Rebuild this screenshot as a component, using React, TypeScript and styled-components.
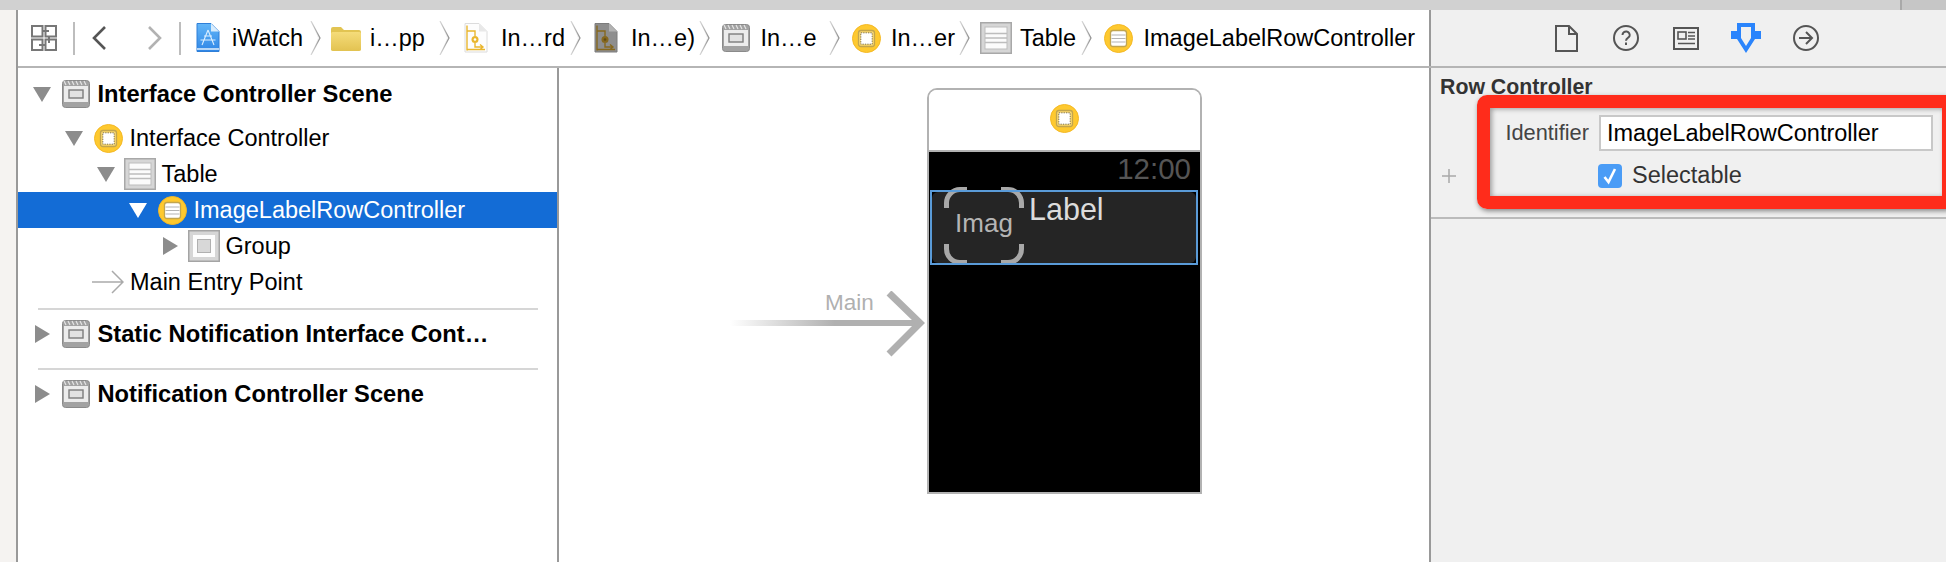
import React from "react";
import styled, { createGlobalStyle } from "styled-components";

const Global = createGlobalStyle`
  html, body { margin: 0; padding: 0; background: #fff; }
  body { font-family: "Liberation Sans", Arial, sans-serif; }
  * { box-sizing: border-box; }
`;

const Page = styled.div`
  width: 1946px;
  height: 562px;
  overflow: hidden;
  display: flex;
  flex-direction: column;
  font-size: 23.5px;
  color: #000;
`;
const TopBar = styled.div`
  height: 10px;
  flex: none;
  background: linear-gradient(to right, #d1d1d1 1900px, #a9a9a9 1900px, #a9a9a9 1902px, #c6c6c6 1902px);
`;
const Workspace = styled.div`
  flex: 1;
  display: flex;
  min-height: 0;
`;
const Gutter = styled.div`
  width: 16px;
  flex: none;
  background: #f5f3f1;
`;
const Main = styled.div`
  flex: 1;
  display: flex;
  flex-direction: column;
  border-left: 2px solid #999;
  min-width: 0;
`;
const HeaderRow = styled.div`
  height: 58px;
  flex: none;
  display: flex;
  border-bottom: 2px solid #b5b5b5;
`;
const Breadcrumb = styled.div`
  flex: 1;
  display: flex;
  align-items: center;
  padding-left: 13px;
  background: #fff;
  white-space: nowrap;
`;
const ToolDivider = styled.span<{ $ml: number }>`
  width: 2px;
  height: 33px;
  background: #bdbdbd;
  margin-left: ${(p) => p.$ml}px;
  flex: none;
`;
const NavArrow = styled.svg<{ $ml: number }>`
  margin-left: ${(p) => p.$ml}px;
  flex: none;
`;
const Crumb = styled.div<{ $w: number; $lead: number; $ml?: number }>`
  width: ${(p) => p.$w}px;
  margin-left: ${(p) => p.$ml ?? 0}px;
  flex: none;
  display: grid;
  grid-template-columns: ${(p) => p.$lead}px 1fr;
  align-items: center;
  line-height: 36px;
  color: #000;
`;
const CrumbSep = styled.svg<{ $after: number }>`
  width: 11px;
  height: 34px;
  flex: none;
  margin-right: ${(p) => p.$after}px;
`;
const InspectorTabs = styled.div`
  width: 517px;
  flex: none;
  border-left: 2px solid #999;
  background: #f0f0f0;
  display: flex;
  align-items: center;
  padding-left: 105px;
`;
const TabSlot = styled.div`
  width: 60px;
  display: flex;
  justify-content: center;
`;
const BodyRow = styled.div`
  flex: 1;
  display: flex;
  min-height: 0;
`;
const Navigator = styled.div`
  width: 541px;
  flex: none;
  border-right: 2px solid #999;
  padding-top: 8px;
  background: #fff;
`;
const TreeRow = styled.div<{ $depth: number; $bold?: boolean; $selected?: boolean; $mt?: number }>`
  height: 36px;
  margin-top: ${(p) => p.$mt ?? 0}px;
  display: flex;
  align-items: center;
  padding-left: ${(p) => 15 + p.$depth * 32}px;
  font-weight: ${(p) => (p.$bold ? 700 : 400)};
  font-size: ${(p) => (p.$bold ? 23.7 : 23.5)}px;
  background: ${(p) => (p.$selected ? "#136cd6" : "transparent")};
  color: ${(p) => (p.$selected ? "#fff" : "#000")};
  line-height: 36px;
  white-space: nowrap;
`;
const TriangleSlot = styled.span`
  width: 18px;
  flex: none;
  margin-right: 9px;
  display: flex;
  justify-content: center;
`;
const IconSlot = styled.span`
  width: 32px;
  flex: none;
  margin-right: 5.5px;
  display: flex;
  align-items: center;
  justify-content: center;
`;
const EntryRow = styled.div`
  height: 36px;
  display: flex;
  align-items: center;
  padding-left: 73.5px;
  line-height: 36px;
`;
const EntrySlot = styled.span`
  width: 38.5px;
  flex: none;
  display: flex;
`;
const TreeSeparator = styled.div<{ $mt: number }>`
  height: 2px;
  background: #d6d6d6;
  margin: ${(p) => p.$mt}px 19.5px 0 20px;
`;
const Canvas = styled.div`
  flex: 1;
  display: flex;
  align-items: flex-start;
  padding: 20px 0 0 171px;
  background: #fff;
  min-width: 0;
`;
const EntryPoint = styled.div`
  width: 197px;
  height: 66px;
  flex: none;
  margin-top: 203px;
  position: relative;
`;
const EntryLabel = styled.span`
  position: absolute;
  left: 95px;
  top: -3px;
  font-size: 22.5px;
  line-height: 30px;
  color: #b0b0b0;
`;
const Device = styled.div`
  width: 275px;
  height: 406px;
  flex: none;
  display: flex;
  flex-direction: column;
  border: 2px solid #b2b2b2;
  border-radius: 10px 10px 0 0;
  overflow: hidden;
`;
const DeviceHeader = styled.div`
  height: 62px;
  flex: none;
  border-bottom: 2px solid #b2b2b2;
  display: flex;
  justify-content: center;
  align-items: center;
  padding-bottom: 3px;
  background: #fff;
`;
const Screen = styled.div`
  flex: 1;
  background: #000;
  display: flex;
  flex-direction: column;
`;
const Time = styled.div`
  text-align: right;
  font-size: 29.5px;
  line-height: 34px;
  color: #555;
  padding-right: 9px;
  margin-bottom: 4px;
`;
const RowFrame = styled.div`
  margin-left: 1px;
  width: 268px;
  height: 75px;
  padding: 2px;
  position: relative;
  &::after {
    content: "";
    position: absolute;
    inset: 0;
    border: 2px solid #5a9bd8;
    pointer-events: none;
  }
`;
const RowInner = styled.div`
  height: 100%;
  background: #252525;
  border-radius: 6px;
  display: flex;
  align-items: flex-start;
  padding-left: 12px;
`;
const ImagePlaceholder = styled.div`
  width: 80px;
  height: 78px;
  flex: none;
  margin-top: -5px;
  position: relative;
  display: flex;
  align-items: center;
  justify-content: center;
  padding-bottom: 6px;
  font-size: 26px;
  color: #b5b5b5;
`;
const Brackets = styled.svg`
  position: absolute;
  inset: 0;
`;
const RowLabel = styled.span`
  margin: 2px 0 0 5px;
  font-size: 30.5px;
  line-height: 30px;
  color: #dcdcdc;
`;
const Inspector = styled.div`
  width: 517px;
  flex: none;
  border-left: 2px solid #999;
  background: #f0f0f0;
  position: relative;
`;
const InspectorSection = styled.div`
  height: 151px;
  padding-top: 7px;
  border-bottom: 2px solid #bbb;
`;
const SectionTitle = styled.div`
  padding-left: 9px;
  font-size: 21.3px;
  line-height: 24px;
  font-weight: 700;
  color: #333;
`;
const FieldRow = styled.div<{ $mt: number }>`
  display: grid;
  grid-template-columns: 168px 334px;
  align-items: center;
  margin-top: ${(p) => p.$mt}px;
`;
const FieldLabel = styled.label`
  text-align: right;
  padding-right: 10px;
  font-size: 21.8px;
  color: #444;
`;
const TextField = styled.input`
  height: 36px;
  width: 334px;
  border: 2px solid #c8c8c8;
  background: #fff;
  padding: 0 0 0 6px;
  font: 23.5px "Liberation Sans", Arial, sans-serif;
  color: #000;
  outline: none;
`;
const PlusCell = styled.div`
  padding-left: 11px;
  display: flex;
`;
const CheckRow = styled.div`
  display: flex;
  align-items: center;
  gap: 10px;
  margin-left: -1px;
  font-size: 23.5px;
  color: #333;
`;
const CheckBox = styled.span`
  width: 24px;
  height: 24px;
  border-radius: 4px;
  background: #4a9cf6;
  display: flex;
  align-items: center;
  justify-content: center;
`;
const Callout = styled.div`
  position: absolute;
  left: 46px;
  top: 27px;
  width: 478px;
  height: 114px;
  border: 13px solid #ff2c1b;
  border-radius: 10px;
  box-shadow: 1px 2px 5px rgba(0, 0, 0, 0.45), inset 2px 1px 5px rgba(0, 0, 0, 0.35);
  pointer-events: none;
`;

const SceneIcon = () => (
  <svg width="28" height="28" viewBox="0 0 28 28">
    <rect x="0.5" y="0.5" width="27" height="27" rx="3" fill="#a2a2a2" stroke="#8a8a8a" />
    <path d="M2 1l2 4M6 1l2 4M10 1l2 4M14 1l2 4M18 1l2 4M22 1l2 4" stroke="#e4e4e4" strokeWidth="1.2" />
    <rect x="2" y="6" width="24" height="16" fill="#ececec" />
    <rect x="7" y="10" width="14" height="8" fill="#e2e2e2" stroke="#7d7d7d" strokeWidth="1.4" />
  </svg>
);
const Coin = ({ rows, size = 29 }: { rows?: boolean; size?: number }) => (
  <svg width={size} height={size} viewBox="0 0 29 29">
    <circle cx="14.5" cy="14.5" r="14" fill="#fec92f" stroke="#f4b824" />
    <rect x="6.5" y="6.5" width="16" height="16" rx="2.5" fill={rows ? "#fff" : "#fbd96d"} stroke="#c2a54e" strokeWidth="1.3" />
    {rows ? (
      <path d="M7.5 11h14M7.5 14.5h14M7.5 18h14" stroke="#b4b4b4" strokeWidth="1.1" />
    ) : (
      <rect x="8.8" y="8.8" width="11.4" height="11.4" fill="#fff" stroke="#7f7350" strokeWidth="1" strokeDasharray="1.3 1.1" />
    )}
  </svg>
);
const TableIcon = () => (
  <svg width="32" height="32" viewBox="0 0 32 32">
    <rect x="0.75" y="0.75" width="30.5" height="30.5" fill="#d6d6d6" stroke="#a8a8a8" strokeWidth="1.5" />
    <rect x="5" y="5" width="22" height="22" fill="#fbfbfb" />
    <path d="M5 11.5h22M5 16h22M5 20.5h22" stroke="#bdbdbd" strokeWidth="1.3" />
    <rect x="5" y="5" width="22" height="22" fill="none" stroke="#bdbdbd" strokeWidth="1" />
  </svg>
);
const GroupIcon = () => (
  <svg width="32" height="32" viewBox="0 0 32 32">
    <rect x="0.75" y="0.75" width="30.5" height="30.5" fill="#d6d6d6" stroke="#a4a4a4" strokeWidth="1.5" />
    <rect x="5" y="5" width="22" height="22" fill="#fdfdfd" />
    <rect x="9.5" y="9.5" width="13" height="13" fill="#d8d8d8" stroke="#b0b0b0" />
  </svg>
);
const Triangle = ({ open, color = "#8c8c8c" }: { open?: boolean; color?: string }) =>
  open ? (
    <svg width="18" height="15" viewBox="0 0 18 15">
      <path d="M0 0h18L9 15z" fill={color} />
    </svg>
  ) : (
    <svg width="15" height="18" viewBox="0 0 15 18">
      <path d="M0 0l15 9L0 18z" fill={color} />
    </svg>
  );
const AppDoc = () => (
  <svg width="24" height="30" viewBox="0 0 24 30">
    <defs>
      <linearGradient id="app-blue" x1="0" y1="0" x2="0" y2="1">
        <stop offset="0" stopColor="#63b6f8" />
        <stop offset="1" stopColor="#2f86e6" />
      </linearGradient>
    </defs>
    <path d="M1 .5h14l8 8V28.500H1z" fill="url(#app-blue)" stroke="#2f7fd8" />
    <path d="M15 .5v8h8z" fill="#d8ecfc" />
    <path d="M1 26h22" stroke="#e6f2fc" strokeWidth="1.5" />
    <path d="M12 7L6 22M12 7l6 15M4.500 17h15M8 13h8" stroke="#dcefff" strokeWidth="1.1" fill="none" />
  </svg>
);
const Folder = () => (
  <svg width="30" height="25" viewBox="0 0 30 25">
    <defs>
      <linearGradient id="folder-y" x1="0" y1="0" x2="0" y2="1">
        <stop offset="0" stopColor="#f5dc7a" />
        <stop offset="1" stopColor="#e3c352" />
      </linearGradient>
    </defs>
    <path d="M0 3a2 2 0 012-2h8l3 3h15a2 2 0 012 2v17a2 2 0 01-2 2H2a2 2 0 01-2-2z" fill="#e2c452" />
    <rect x="0" y="6" width="30" height="18.500" rx="1.500" fill="url(#folder-y)" />
  </svg>
);
const StoryDoc = ({ dark }: { dark?: boolean }) => {
  const line = dark ? "#86681f" : "#e9b62e";
  return (
    <svg width="24" height="30" viewBox="0 0 24 30">
      <path d="M1 .5h14l8 8V29H1z" fill={dark ? "#8e8e8e" : "#fdfdfd"} stroke={dark ? "#7c7c7c" : "#dcdcdc"} />
      <path d="M15 .5v8h8z" fill={dark ? "#b2b2b2" : "#e8e8e8"} />
      <path d="M3 8h8v5M11 20v4h8M16 21.500l3 2.500-3 2.500M3 26.500h18" stroke={line} strokeWidth="1.4" fill="none" />
      <path d="M3 2.500v25" stroke={line} strokeWidth="1.4" />
      <circle cx="11" cy="16.500" r="3.500" fill={line} />
      <circle cx="11" cy="16.500" r="1.300" fill={dark ? "#5f4a16" : "#fff"} />
    </svg>
  );
};
const Sep = ({ after }: { after: number }) => (
  <CrumbSep $after={after} viewBox="0 0 11 34">
    <defs>
      <linearGradient id="sep-fade" x1="0" y1="0" x2="0" y2="1">
        <stop offset="0" stopColor="#d8d8d8" />
        <stop offset="0.5" stopColor="#8d8d8d" />
        <stop offset="1" stopColor="#d8d8d8" />
      </linearGradient>
    </defs>
    <path d="M1 0l9 17-9 17 7-17z" fill="#f1f1f1" />
    <path d="M1 0l9 17-9 17" fill="none" stroke="url(#sep-fade)" strokeWidth="1.2" />
  </CrumbSep>
);

export default function App() {
  return (
    <Page>
      <Global />
      <TopBar />
      <Workspace>
        <Gutter />
        <Main>
          <HeaderRow>
            <Breadcrumb>
              <svg width="26" height="26" viewBox="0 0 26 26" fill="none" stroke="#777" strokeWidth="2">
                <rect x="1" y="1" width="10.500" height="10.500" />
                <rect x="14.500" y="1" width="10.500" height="10.500" />
                <rect x="1" y="14.500" width="10.500" height="10.500" />
                <rect x="14.500" y="14.500" width="10.500" height="10.500" />
                <path d="M11 6h7M18 11v7M8 20h7" />
              </svg>
              <ToolDivider $ml={16} />
              <NavArrow $ml={17} width="14" height="24" viewBox="0 0 14 24" fill="none" stroke="#555" strokeWidth="2.600">
                <path d="M13 1L2 12l11 11" />
              </NavArrow>
              <NavArrow $ml={42} width="14" height="24" viewBox="0 0 14 24" fill="none" stroke="#b2b2b2" strokeWidth="2.600">
                <path d="M1 1l11 11L1 23" />
              </NavArrow>
              <ToolDivider $ml={17} />
              <Crumb $ml={15} $w={113.7} $lead={36}>
                <AppDoc />
                <span>iWatch</span>
              </Crumb>
              <Sep after={10.3} />
              <Crumb $w={108.5} $lead={39}>
                <Folder />
                <span>i…pp</span>
              </Crumb>
              <Sep after={13.5} />
              <Crumb $w={106} $lead={37}>
                <StoryDoc />
                <span>In…rd</span>
              </Crumb>
              <Sep after={13} />
              <Crumb $w={105} $lead={37}>
                <StoryDoc dark />
                <span>In…e)</span>
              </Crumb>
              <Sep after={12.5} />
              <Crumb $w={106.5} $lead={38}>
                <SceneIcon />
                <span>In…e</span>
              </Crumb>
              <Sep after={12} />
              <Crumb $w={107} $lead={39}>
                <Coin />
                <span>In…er</span>
              </Crumb>
              <Sep after={10.5} />
              <Crumb $w={100.5} $lead={39.5}>
                <TableIcon />
                <span>Table</span>
              </Crumb>
              <Sep after={12} />
              <Crumb $w={311} $lead={39.5}>
                <Coin rows />
                <span>ImageLabelRowController</span>
              </Crumb>
            </Breadcrumb>
            <InspectorTabs>
              <TabSlot>
                <svg width="23" height="27" viewBox="0 0 23 27" fill="none" stroke="#555" strokeWidth="2">
                  <path d="M1 1h13l8 8v17H1z" />
                  <path d="M14 1v8h8" />
                </svg>
              </TabSlot>
              <TabSlot>
                <svg width="26" height="26" viewBox="0 0 26 26" fill="none" stroke="#555" strokeWidth="2">
                  <circle cx="13" cy="13" r="12" />
                  <path d="M9.500 10a3.600 3.600 0 117 1.200c-.7 1.600-3.500 2-3.500 4.600" />
                  <path d="M13 17.600v2.400" />
                </svg>
              </TabSlot>
              <TabSlot>
                <svg width="26" height="23" viewBox="0 0 26 23" fill="none" stroke="#555" strokeWidth="2">
                  <rect x="1" y="1" width="24" height="21" />
                  <rect x="5" y="5" width="8" height="7" strokeWidth="1.600" />
                  <path d="M15 5.500h7M15 9h7M15 12h7M5 16.500h17" strokeWidth="1.600" />
                </svg>
              </TabSlot>
              <TabSlot>
                <svg width="30" height="30" viewBox="0 0 30 30">
                  <path
                    fillRule="evenodd"
                    d="M6 0h18v8h6v8h-6l-9 14-9-14H0V8h6zM10 4v11l5 8 5-8V4z"
                    fill="#2a84fc"
                  />
                </svg>
              </TabSlot>
              <TabSlot>
                <svg width="26" height="26" viewBox="0 0 26 26" fill="none" stroke="#555" strokeWidth="2">
                  <circle cx="13" cy="13" r="12" />
                  <path d="M6 13h13M13 7l6 6-6 6" />
                </svg>
              </TabSlot>
            </InspectorTabs>
          </HeaderRow>
          <BodyRow>
            <Navigator>
              <TreeRow $depth={0} $bold>
                <TriangleSlot><Triangle open /></TriangleSlot>
                <IconSlot><SceneIcon /></IconSlot>
                <span>Interface Controller Scene</span>
              </TreeRow>
              <TreeRow $depth={1} $mt={8}>
                <TriangleSlot><Triangle open /></TriangleSlot>
                <IconSlot><Coin /></IconSlot>
                <span>Interface Controller</span>
              </TreeRow>
              <TreeRow $depth={2}>
                <TriangleSlot><Triangle open /></TriangleSlot>
                <IconSlot><TableIcon /></IconSlot>
                <span>Table</span>
              </TreeRow>
              <TreeRow $depth={3} $selected>
                <TriangleSlot><Triangle open color="#fff" /></TriangleSlot>
                <IconSlot><Coin rows /></IconSlot>
                <span>ImageLabelRowController</span>
              </TreeRow>
              <TreeRow $depth={4}>
                <TriangleSlot><Triangle color="#8c8c8c" /></TriangleSlot>
                <IconSlot><GroupIcon /></IconSlot>
                <span>Group</span>
              </TreeRow>
              <EntryRow>
                <EntrySlot>
                  <svg width="32" height="24" viewBox="0 0 32 24" fill="none" stroke="#aaa" strokeWidth="1.500">
                    <path d="M0 12h30M20 1l11 11-11 11" />
                  </svg>
                </EntrySlot>
                <span>Main Entry Point</span>
              </EntryRow>
              <TreeSeparator $mt={8} />
              <TreeRow $depth={0} $bold $mt={6}>
                <TriangleSlot><Triangle /></TriangleSlot>
                <IconSlot><SceneIcon /></IconSlot>
                <span>Static Notification Interface Cont…</span>
              </TreeRow>
              <TreeSeparator $mt={16} />
              <TreeRow $depth={0} $bold $mt={6}>
                <TriangleSlot><Triangle /></TriangleSlot>
                <IconSlot><SceneIcon /></IconSlot>
                <span>Notification Controller Scene</span>
              </TreeRow>
            </Navigator>
            <Canvas>
              <EntryPoint>
                <svg width="197" height="66" viewBox="0 0 197 66" fill="none">
                  <defs>
                    <linearGradient id="entry-shaft" x1="0" y1="0" x2="1" y2="0">
                      <stop offset="0" stopColor="#b0b0b0" stopOpacity="0" />
                      <stop offset="0.55" stopColor="#b0b0b0" />
                      <stop offset="1" stopColor="#b0b0b0" />
                    </linearGradient>
                  </defs>
                  <rect x="0" y="29" width="190" height="6" fill="url(#entry-shaft)" />
                  <path d="M159 2l31 30-31 31" stroke="#b0b0b0" strokeWidth="7" />
                </svg>
                <EntryLabel>Main</EntryLabel>
              </EntryPoint>
              <Device>
                <DeviceHeader><Coin /></DeviceHeader>
                <Screen>
                  <Time>12:00</Time>
                  <RowFrame>
                    <RowInner>
                      <ImagePlaceholder>
                        <Brackets width="80" height="78" viewBox="0 0 80 78" fill="none" stroke="#a8a8a8" strokeWidth="5">
                          <path d="M2.500 21V16A13.500 13.500 0 0116 2.500h7" />
                          <path d="M57 2.500h7A13.500 13.500 0 0177.500 16v5" />
                          <path d="M2.500 57v5A13.500 13.500 0 0016 75.500h7" />
                          <path d="M57 75.500h7A13.500 13.500 0 0077.500 62v-5" />
                        </Brackets>
                        Imag
                      </ImagePlaceholder>
                      <RowLabel>Label</RowLabel>
                    </RowInner>
                  </RowFrame>
                </Screen>
              </Device>
            </Canvas>
            <Inspector>
              <InspectorSection>
                <SectionTitle>Row Controller</SectionTitle>
                <FieldRow $mt={16}>
                  <FieldLabel>Identifier</FieldLabel>
                  <TextField readOnly value="ImageLabelRowController" />
                </FieldRow>
                <FieldRow $mt={11}>
                  <PlusCell>
                    <svg width="14" height="14" viewBox="0 0 14 14" stroke="#a8a8a8" strokeWidth="1.500">
                      <path d="M7 0v14M0 7h14" />
                    </svg>
                  </PlusCell>
                  <CheckRow>
                    <CheckBox>
                      <svg width="16" height="18" viewBox="0 0 16 18" fill="none" stroke="#fff" strokeWidth="2.600">
                        <path d="M2.500 10l4 5L13 2" />
                      </svg>
                    </CheckBox>
                    <span>Selectable</span>
                  </CheckRow>
                </FieldRow>
              </InspectorSection>
              <Callout />
            </Inspector>
          </BodyRow>
        </Main>
      </Workspace>
    </Page>
  );
}
